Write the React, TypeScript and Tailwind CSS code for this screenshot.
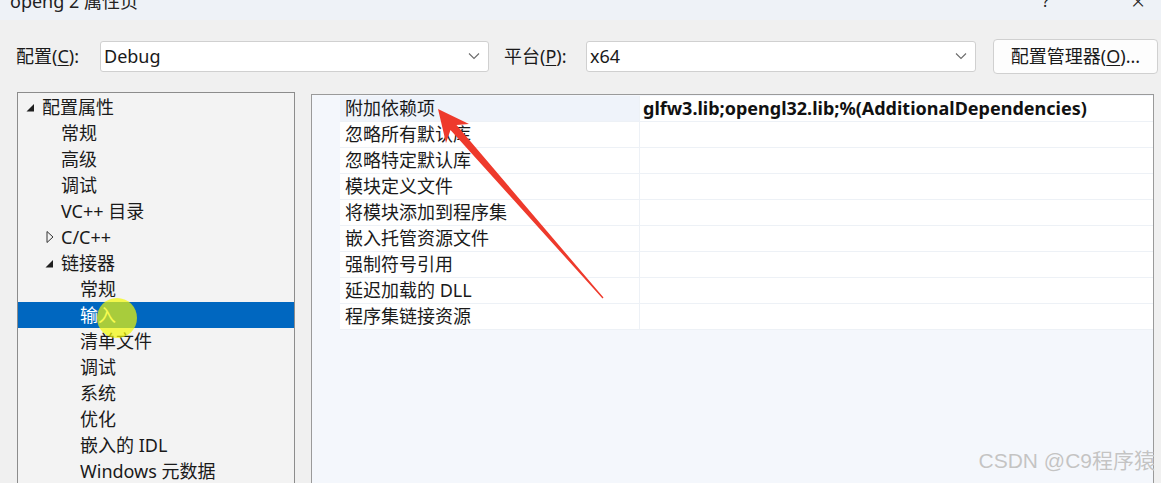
import React from "react";

const treeItems: { label: string; level: number; arrow?: "open" | "closed"; selected?: boolean }[] = [
  { label: "配置属性", level: 0, arrow: "open" },
  { label: "常规", level: 1 },
  { label: "高级", level: 1 },
  { label: "调试", level: 1 },
  { label: "VC++ 目录", level: 1 },
  { label: "C/C++", level: 1, arrow: "closed" },
  { label: "链接器", level: 1, arrow: "open" },
  { label: "常规", level: 2 },
  { label: "输入", level: 2, selected: true },
  { label: "清单文件", level: 2 },
  { label: "调试", level: 2 },
  { label: "系统", level: 2 },
  { label: "优化", level: 2 },
  { label: "嵌入的 IDL", level: 2 },
  { label: "Windows 元数据", level: 2 },
];

const props = [
  { name: "附加依赖项", value: "glfw3.lib;opengl32.lib;%(AdditionalDependencies)" },
  { name: "忽略所有默认库", value: "" },
  { name: "忽略特定默认库", value: "" },
  { name: "模块定义文件", value: "" },
  { name: "将模块添加到程序集", value: "" },
  { name: "嵌入托管资源文件", value: "" },
  { name: "强制符号引用", value: "" },
  { name: "延迟加载的 DLL", value: "" },
  { name: "程序集链接资源", value: "" },
];

const Chevron = () => (
  <svg width="12" height="8" viewBox="0 0 12 8" className="shrink-0">
    <polyline points="1,1.5 6,6.5 11,1.5" fill="none" stroke="#6b6b6b" strokeWidth="1.1" />
  </svg>
);

const Combo = ({ value, width }: { value: string; width: string }) => (
  <div className={`${width} h-[31px] bg-white border border-[#d0d0d0] rounded-[3px] flex items-center justify-between pl-[3px] pr-[8px]`}>
    <span className="text-[18px] text-[#1a1a1a]">{value}</span>
    <Chevron />
  </div>
);

const TreeArrow = ({ kind }: { kind: "open" | "closed" }) =>
  kind === "open" ? (
    <svg width="9" height="9" viewBox="0 0 9 9">
      <polygon points="8,0.5 8,8 0.5,8" fill="#1f1f1f" />
    </svg>
  ) : (
    <svg width="8" height="13" viewBox="0 0 8 13">
      <polygon points="1,1 7,6.5 1,12" fill="none" stroke="#333" strokeWidth="1" />
    </svg>
  );

export default function App() {
  return (
    <div className="relative w-[1161px] h-[483px] overflow-hidden bg-[#f0f0f0] text-[#1a1a1a] font-['Noto_Sans','Noto_Sans_CJK_SC',sans-serif]">
      {/* title bar, clipped at the top */}
      <div className="h-[20px] bg-[#eef2f7] overflow-hidden flex items-start">
        <div className="flex-1 h-[26px] flex items-center -mt-[12px] pl-[10px] text-[18px] text-[#222]">
          <span>openg 2 属性页</span>
          <span className="ml-auto mr-[82px] text-[16px]">?</span>
          <span className="mr-[16px] text-[24px] font-light">×</span>
        </div>
      </div>

      {/* config / platform row */}
      <div className="h-[72px] flex items-center">
        <span className="ml-[16px] w-[84px] text-[18px]">
          配置(<span className="underline underline-offset-2">C</span>):
        </span>
        <Combo value="Debug" width="w-[389px]" />
        <span className="ml-[15px] w-[82px] text-[18px]">
          平台(<span className="underline underline-offset-2">P</span>):
        </span>
        <Combo value="x64" width="w-[390px]" />
        <button className="ml-[17px] w-[165px] h-[35px] bg-[#fdfdfd] border border-[#d0d0d0] rounded-[4px] text-[18px] flex items-center justify-center">
          配置管理器(<span className="underline underline-offset-2">O</span>)...
        </button>
      </div>

      {/* panels */}
      <div className="flex items-start">
        <div className="ml-[17px] w-[278px] h-[400px] border border-[#8c8c8c] bg-[#f3f3f3] pt-[1px]">
          {treeItems.map((it, i) => (
            <div
              key={i}
              className={`h-[26px] flex items-center text-[18px] ${
                it.selected ? "bg-[#0067c0] text-white" : ""
              }`}
              style={{ paddingLeft: 24 + it.level * 19 }}
            >
              <span className="relative">
                {it.arrow && (
                  <span className={`absolute top-1/2 -translate-y-1/2 flex ${it.arrow === "open" ? "-left-[16px] mt-[1px]" : "-left-[15px]"}`}>
                    <TreeArrow kind={it.arrow} />
                  </span>
                )}
                {it.label}
              </span>
            </div>
          ))}
        </div>

        <div className="ml-[16px] mt-[2px] w-[843px] h-[400px] border-l border-t border-r border-[#9a9a9a] bg-[#f4f7fc] pt-[1px]">
          {props.map((p, i) => (
            <div key={i} className="ml-[28px] h-[26px] flex border-b border-[#edf1f6] bg-white">
              <div
                className={`w-[299px] shrink-0 flex items-center pl-[5px] text-[18px] ${
                  i === 0 ? "bg-[#eff3fa]" : ""
                }`}
              >
                {p.name}
              </div>
              <div className="flex-1 flex items-center border-l border-[#edf1f6] pl-[3px] text-[18px] font-bold text-[#111]">
                {p.value}
              </div>
            </div>
          ))}
        </div>
      </div>

      {/* cursor highlight */}
      <div className="absolute left-[97px] top-[298px] w-[40px] h-[40px] rounded-full bg-[rgba(243,249,0,0.69)] pointer-events-none" />

      {/* red annotation arrow */}
      <svg className="absolute left-0 top-0 pointer-events-none" width="1161" height="483">
        <path
          d="M438 109 L469 124 L456.5 125 L603.5 297.5 L602.5 298.5 L450.5 130 L446 143 Z"
          fill="#ee3a2c"
        />
      </svg>

      {/* watermark */}
      <div className="absolute right-[6px] bottom-[7px] text-[21px] text-[#c4c4c4] [text-shadow:0_0_1px_#fff] font-['Liberation_Sans','Noto_Sans_CJK_SC',sans-serif]">
        CSDN @C9程序猿
      </div>
    </div>
  );
}
